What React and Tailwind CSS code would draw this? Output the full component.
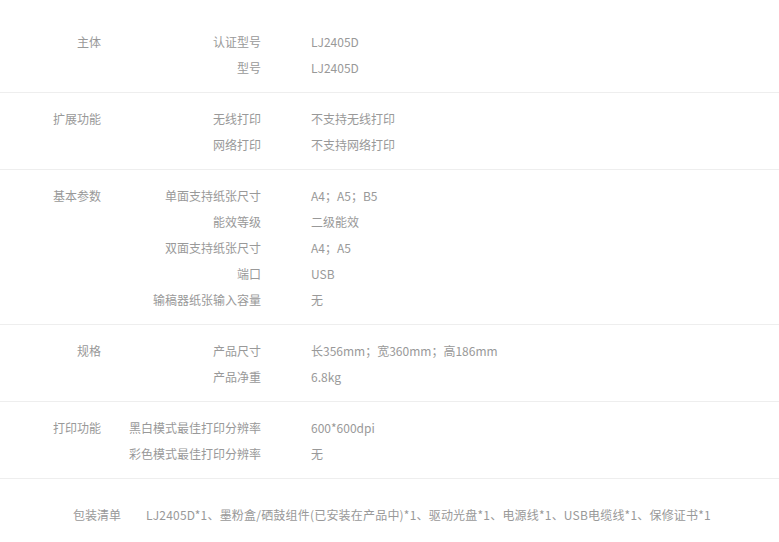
const groups = [
  { title: "主体", rows: [["认证型号", "LJ2405D"], ["型号", "LJ2405D"]] },
  { title: "扩展功能", rows: [["无线打印", "不支持无线打印"], ["网络打印", "不支持网络打印"]] },
  {
    title: "基本参数",
    rows: [
      ["单面支持纸张尺寸", "A4；A5；B5"],
      ["能效等级", "二级能效"],
      ["双面支持纸张尺寸", "A4；A5"],
      ["端口", "USB"],
      ["输稿器纸张输入容量", "无"],
    ],
  },
  { title: "规格", rows: [["产品尺寸", "长356mm；宽360mm；高186mm"], ["产品净重", "6.8kg"]] },
  { title: "打印功能", rows: [["黑白模式最佳打印分辨率", "600*600dpi"], ["彩色模式最佳打印分辨率", "无"]] },
];

export default function App() {
  return (
    <div
      className="w-[779px] h-[542px] overflow-hidden bg-white text-[12px] text-[#999]"
      style={{ fontFamily: '"Noto Sans CJK SC", "Liberation Sans", sans-serif' }}
    >
      <div className="pt-[16px]">
        {groups.map((g) => (
          <div key={g.title} className="flex pt-[13px] pb-[11px] border-b border-[#eeeeee]">
            <div className="w-[101px] shrink-0 text-right leading-[26px]">{g.title}</div>
            <div className="flex flex-col">
              {g.rows.map(([k, v]) => (
                <div key={k} className="flex leading-[26px]">
                  <div className="w-[160px] shrink-0 text-right">{k}</div>
                  <div className="pl-[50px]">{v}</div>
                </div>
              ))}
            </div>
          </div>
        ))}
        <div className="flex pt-[23px] leading-[26px]">
          <div className="w-[121px] shrink-0 text-right">包装清单</div>
          <div className="pl-[25px] tracking-[0.2px]">
            LJ2405D*1、墨粉盒/硒鼓组件(已安装在产品中)*1、驱动光盘*1、电源线*1、USB电缆线*1、保修证书*1
          </div>
        </div>
      </div>
    </div>
  );
}
